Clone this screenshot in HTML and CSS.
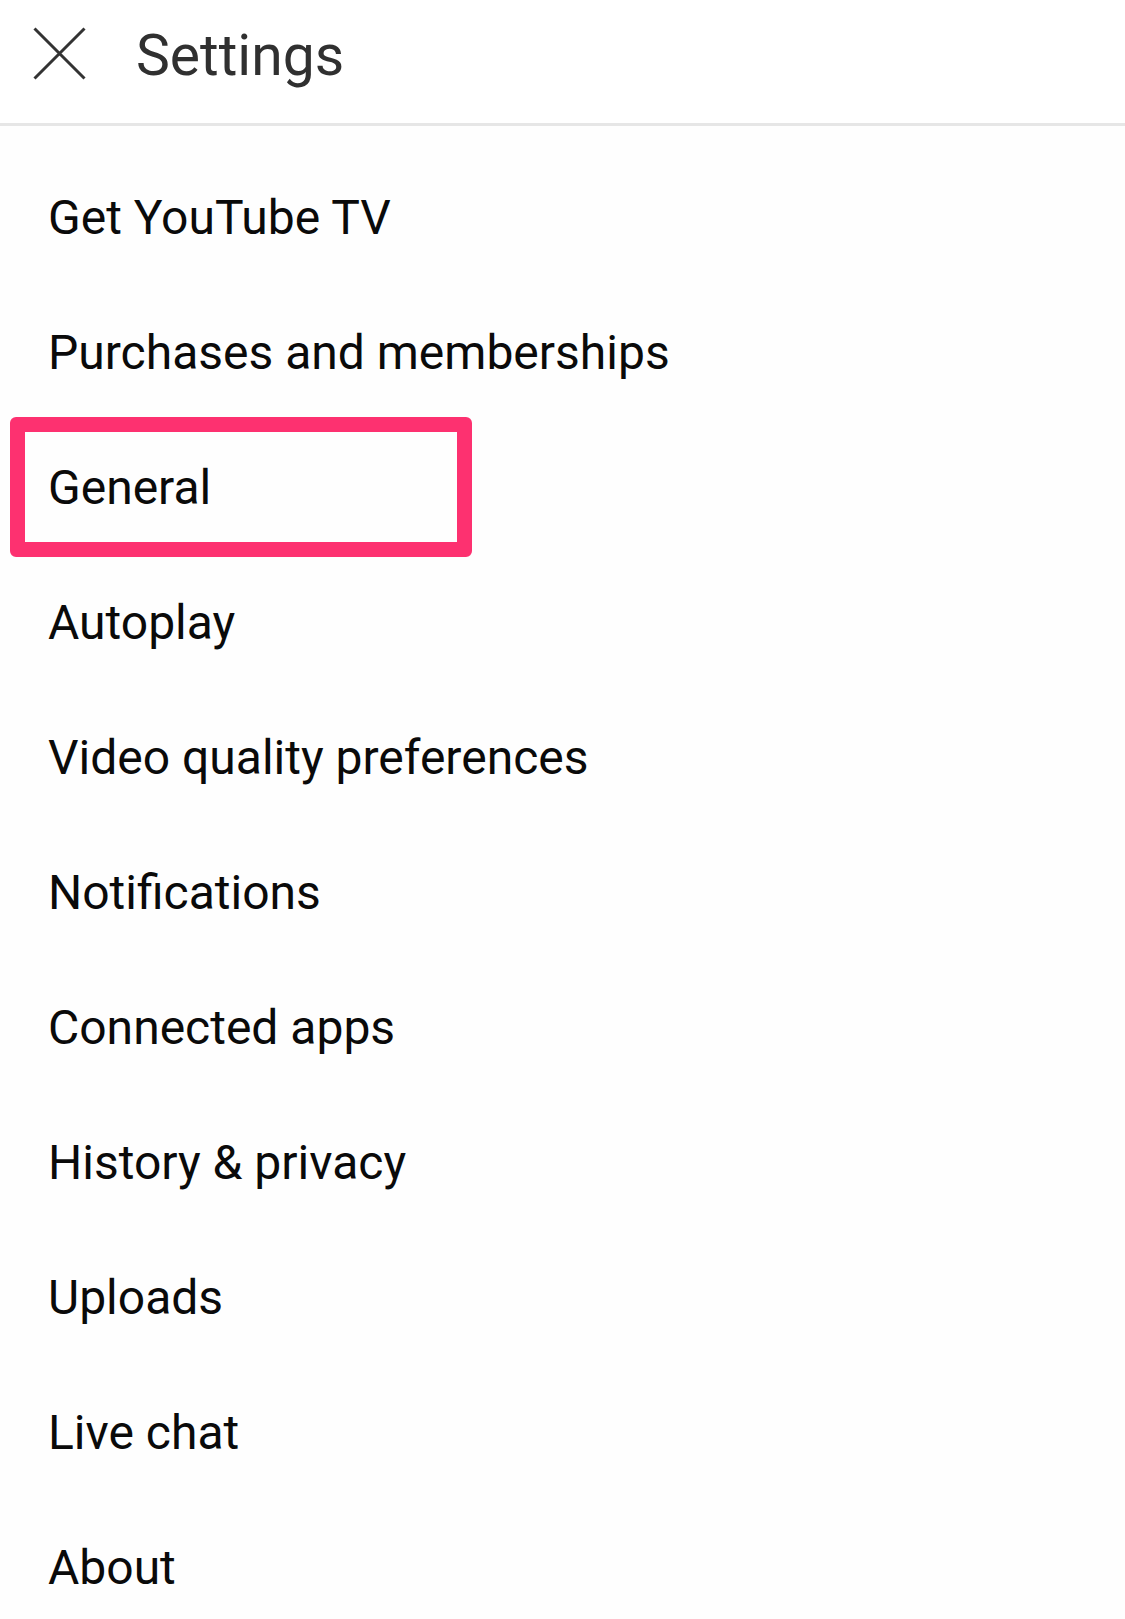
FILE: index.html
```html
<!DOCTYPE html>
<html lang="en">
<head>
<meta charset="utf-8">
<title>Settings</title>
<link rel="stylesheet" href="styles.css">
</head>
<body>
<div class="screen">
  <header class="topbar">
    <button class="close" aria-label="Close">
      <svg width="53" height="53" viewBox="0 0 53 53" aria-hidden="true">
        <path d="M1.5 1.5 L51.5 51.5 M51.5 1.5 L1.5 51.5" stroke="#333333" stroke-width="3" fill="none" stroke-linecap="butt"/>
      </svg>
    </button>
    <h1 class="title">Settings</h1>
  </header>
  <ul class="menu">
    <li class="item">Get YouTube TV</li>
    <li class="item">Purchases and memberships</li>
    <li class="item item-highlight">General<span class="highlight-box" aria-hidden="true"></span></li>
    <li class="item">Autoplay</li>
    <li class="item">Video quality preferences</li>
    <li class="item">Notifications</li>
    <li class="item">Connected apps</li>
    <li class="item">History &amp; privacy</li>
    <li class="item">Uploads</li>
    <li class="item">Live chat</li>
    <li class="item">About</li>
  </ul>
</div>
</body>
</html>
```
FILE: styles.css
```css
html, body {
  margin: 0;
  padding: 0;
  background: #ffffff;
}
body {
  font-family: Roboto, "Noto Sans", "Liberation Sans", sans-serif;
  overflow: hidden;
}
.screen {
  width: 1125px;
  height: 1619px;
  background: #fefefe;
}
.topbar {
  display: flex;
  align-items: center;
  box-sizing: border-box;
  height: 126px;
  padding: 0 0 16px 33px;
  background: #ffffff;
  border-bottom: 3px solid #e6e6e6;
}
.close {
  display: flex;
  width: 53px;
  height: 53px;
  padding: 0;
  margin: 0;
  border: 0;
  background: none;
}
.title {
  margin: 4px 0 0 50px;
  font-size: 57px;
  font-weight: 400;
  color: #303030;
  line-height: normal;
}
.menu {
  list-style: none;
  margin: 0;
  padding: 24px 0 0 0;
}
.item {
  position: relative;
  height: 135px;
  line-height: 135px;
  padding-left: 48px;
  font-size: 48px;
  color: #0a0a0a;
}
.highlight-box {
  position: absolute;
  left: 10px;
  top: -3px;
  width: 462px;
  height: 140px;
  box-sizing: border-box;
  border: 15px solid #fd3170;
  border-radius: 6px;
}
```
